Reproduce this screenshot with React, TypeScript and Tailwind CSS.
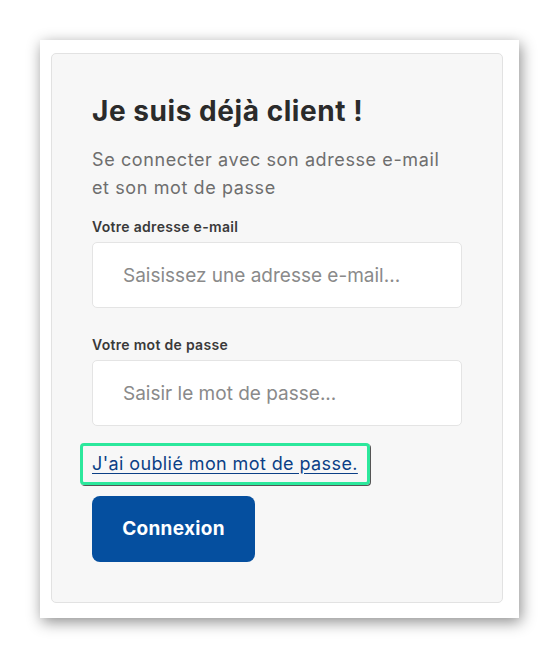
import React, { useState } from 'react';

const App = () => {
  const [email, setEmail] = useState('');
  const [password, setPassword] = useState('');

  return (
    <div className="min-h-screen bg-white pt-10" style={{ fontFamily: 'Inter, "Noto Sans", sans-serif' }}>
      <div className="mx-auto w-[479px] bg-white pl-[11px] pt-[13px] pr-[16px] pb-[15px] shadow-[2px_4px_14px_rgba(0,0,0,0.45)]">
        <div className="rounded-[5px] border border-[#e2e2e2] bg-[#f7f7f7] px-10 pt-10 pb-10">
          <h1 className="text-[28px] leading-[34px] font-bold tracking-[0.55px] text-[#2b2b2b]">
            Je suis déjà client !
          </h1>
          <p className="mt-[18px] text-[18px] leading-[28px] tracking-[0.6px] text-[#6e6e6e]">
            Se connecter avec son adresse e-mail
            <br />
            et son mot de passe
          </p>

          <label className="mt-[15px] block text-[14px] leading-[20px] font-semibold tracking-[0.3px] text-[#3a3a3a]">
            Votre adresse e-mail
          </label>
          <input
            type="email"
            value={email}
            onChange={(e) => setEmail(e.target.value)}
            placeholder="Saisissez une adresse e-mail..."
            className="mt-[5px] block h-[66px] w-full rounded-[5px] border border-[#e4e4e4] bg-white px-[30px] text-[19px] text-[#333] placeholder:text-[#8a8a8a] outline-none"
          />

          <label className="mt-[27px] block text-[14px] leading-[20px] font-semibold tracking-[0.3px] text-[#3a3a3a]">
            Votre mot de passe
          </label>
          <input
            type="password"
            value={password}
            onChange={(e) => setPassword(e.target.value)}
            placeholder="Saisir le mot de passe..."
            className="mt-[5px] block h-[66px] w-full rounded-[5px] border border-[#e4e4e4] bg-white px-[30px] text-[19px] text-[#333] placeholder:text-[#8a8a8a] outline-none"
          />

          <div className="mt-[17px] -ml-3 inline-block rounded-[4px] border-[3px] border-[#2ce89c] px-[9px] shadow-[1px_1px_0_#555]">
            <a href="#" className="block text-[18px] leading-[36px] tracking-[0.4px] text-[#0b3f86] underline underline-offset-[3px]">
              J'ai oublié mon mot de passe.
            </a>
          </div>

          <button className="mt-[11px] block h-[66px] w-[163px] rounded-[8px] bg-[#054f9f] text-[19px] font-bold tracking-[0.3px] text-white">
            Connexion
          </button>
        </div>
      </div>
    </div>
  );
};

export default App;
